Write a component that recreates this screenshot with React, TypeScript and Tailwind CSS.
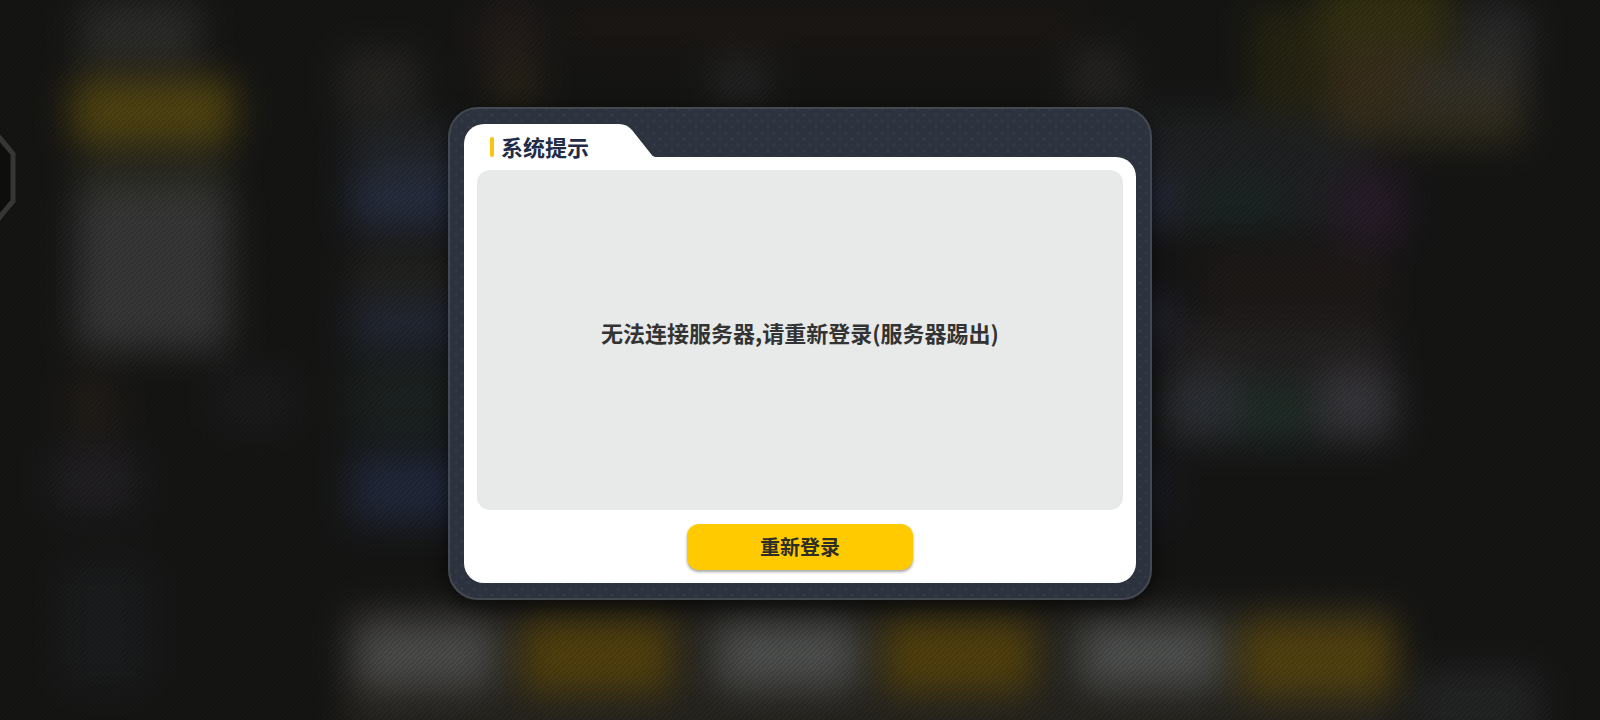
type Blob = {
  x: number;
  y: number;
  w: number;
  h: number;
  fill: string;
};

const BLOBS: Blob[] = [
  { x: 80, y: 0, w: 120, h: 66, fill: "#2c2c2a" },
  { x: 78, y: 150, w: 150, h: 40, fill: "#28281f" },
  { x: 72, y: 78, w: 162, h: 66, fill: "#524512" },
  { x: 76, y: 188, w: 154, h: 162, fill: "#383838" },
  { x: 68, y: 375, w: 50, h: 60, fill: "#231e18" },
  { x: 50, y: 445, w: 90, h: 70, fill: "#211f22" },
  { x: 60, y: 560, w: 90, h: 130, fill: "#1b1c1d" },
  { x: 215, y: 370, w: 80, h: 60, fill: "#1c1c1d" },
  { x: 340, y: 50, w: 80, h: 70, fill: "#262522" },
  { x: 480, y: 0, w: 60, h: 70, fill: "#241d1b" },
  { x: 490, y: 60, w: 50, h: 50, fill: "#292318" },
  { x: 560, y: 0, w: 520, h: 50, fill: "#1c1714" },
  { x: 710, y: 55, w: 60, h: 50, fill: "#232423" },
  { x: 1070, y: 45, w: 60, h: 70, fill: "#252422" },
  { x: 350, y: 125, w: 140, h: 45, fill: "#23262a" },
  { x: 350, y: 170, w: 140, h: 60, fill: "#272e3f" },
  { x: 350, y: 250, w: 140, h: 46, fill: "#232320" },
  { x: 350, y: 300, w: 140, h: 48, fill: "#242936" },
  { x: 350, y: 360, w: 140, h: 80, fill: "#1c2221" },
  { x: 350, y: 455, w: 145, h: 68, fill: "#22293c" },
  { x: 1120, y: 110, w: 250, h: 120, fill: "#1f2122" },
  { x: 1120, y: 170, w: 55, h: 60, fill: "#262a3b" },
  { x: 1120, y: 290, w: 55, h: 60, fill: "#222330" },
  { x: 1120, y: 460, w: 50, h: 60, fill: "#1d1f29" },
  { x: 1200, y: 185, w: 80, h: 40, fill: "#1b2725" },
  { x: 1335, y: 170, w: 70, h: 75, fill: "#281c2a" },
  { x: 1200, y: 250, w: 190, h: 60, fill: "#1f1a18" },
  { x: 1180, y: 320, w: 210, h: 50, fill: "#252121" },
  { x: 1165, y: 370, w: 75, h: 70, fill: "#2d3035" },
  { x: 1240, y: 375, w: 70, h: 70, fill: "#202c27" },
  { x: 1315, y: 370, w: 80, h: 70, fill: "#37363b" },
  { x: 1250, y: 5, w: 80, h: 110, fill: "#262412" },
  { x: 1320, y: -20, w: 130, h: 80, fill: "#343112" },
  { x: 1330, y: 40, w: 100, h: 95, fill: "#382e1b" },
  { x: 1460, y: 5, w: 70, h: 70, fill: "#2a2b2a" },
  { x: 1410, y: 60, w: 115, h: 60, fill: "#34312b" },
  { x: 1370, y: 105, w: 155, h: 38, fill: "#332e1d" },
  { x: 345, y: 606, w: 1050, h: 150, fill: "#26241f" },
  { x: 355, y: 622, w: 140, h: 66, fill: "#4e4e4d" },
  { x: 522, y: 620, w: 150, h: 72, fill: "#54420d" },
  { x: 716, y: 622, w: 142, h: 66, fill: "#505251" },
  { x: 884, y: 620, w: 150, h: 72, fill: "#54420d" },
  { x: 1080, y: 622, w: 142, h: 66, fill: "#505251" },
  { x: 1240, y: 620, w: 156, h: 76, fill: "#544310" },
  { x: 1410, y: 670, w: 130, h: 70, fill: "#242525" },
];

function Backdrop() {
  return (
    <svg
      className="absolute inset-0 h-full w-full"
      viewBox="0 0 1600 720"
      preserveAspectRatio="xMidYMid slice"
      aria-hidden="true"
    >
      <defs>
        <filter
          id="soft"
          filterUnits="userSpaceOnUse"
          x="-60"
          y="-60"
          width="1720"
          height="840"
          colorInterpolationFilters="sRGB"
        >
          <feGaussianBlur stdDeviation="18" />
        </filter>
        <pattern
          id="stripes"
          width="5"
          height="5"
          patternUnits="userSpaceOnUse"
        >
          <path
            d="M-1 1L1 -1M0 5L5 0M4 6L6 4"
            stroke="#000"
            strokeOpacity="0.14"
            strokeWidth="1.8"
          />
        </pattern>
      </defs>
      <g filter="url(#soft)">
        <rect x="-60" y="-60" width="1720" height="840" fill="#151514" />
        {BLOBS.map((b, i) => (
          <rect
            key={i}
            x={b.x}
            y={b.y}
            width={b.w}
            height={b.h}
            rx="12"
            fill={b.fill}
          />
        ))}
      </g>
      <rect width="1600" height="720" fill="url(#stripes)" />
      <path
        d="M-6 131L13 154V201L-6 224"
        fill="#0e0e0d"
        stroke="#363636"
        strokeWidth="5"
      />
    </svg>
  );
}

function DialogTab({ title }: { title: string }) {
  return (
    <div className="flex h-[33px]">
      <div className="flex w-[152px] items-center gap-[7px] rounded-tl-[20px] bg-white pt-3 pl-[26px]">
        <span className="h-5 w-1 shrink-0 rounded-full bg-[#fcc40c]" />
        <h1
          id="dialog-title"
          className="pb-0.5 text-[22px] leading-6 font-bold whitespace-nowrap text-[#222c48]"
        >
          {title}
        </h1>
      </div>
      <svg width="42" height="33" viewBox="0 0 42 33" aria-hidden="true">
        <path d="M0 0H3Q11 0 16 6L35 30Q37 33 39 33H0Z" fill="#fff" />
      </svg>
    </div>
  );
}

function Dialog({
  title,
  message,
  action,
}: {
  title: string;
  message: string;
  action: string;
}) {
  return (
    <div
      role="alertdialog"
      aria-labelledby="dialog-title"
      aria-describedby="dialog-message"
      className="relative w-full max-w-[704px] rounded-[30px] border-2 border-[#444951] bg-[#2d333e] bg-[radial-gradient(circle,#343b45_1px,transparent_2px),radial-gradient(circle,#343b45_1px,transparent_2px)] bg-size-[12px_12px] bg-position-[0_0,6px_6px] px-[14px] py-[15px] shadow-[0_6px_20px_rgba(0,0,0,0.6)]"
    >
      <DialogTab title={title} />
      <div className="flex flex-col items-center gap-[14px] rounded-[20px] rounded-tl-none bg-white p-[13px]">
        <div className="flex min-h-[340px] w-full items-center justify-center rounded-[13px] bg-[#e8eae9] px-6 pb-4">
          <p
            id="dialog-message"
            className="text-center text-[22px] leading-8 font-bold text-[#333]"
          >
            {message}
          </p>
        </div>
        <button
          type="button"
          className="h-[46px] w-[226px] cursor-pointer rounded-xl bg-[#ffcb00] text-[20px] leading-6 font-bold text-[#2d2e26] shadow-[0_2px_3px_rgba(0,0,0,0.35)]"
        >
          {action}
        </button>
      </div>
    </div>
  );
}

export default function App() {
  return (
    <main className="relative flex min-h-screen items-center justify-center overflow-hidden bg-[#151514] px-4 pb-[13px] font-['Noto_Sans_CJK_SC',sans-serif]">
      <Backdrop />
      <Dialog
        title="系统提示"
        message="无法连接服务器,请重新登录(服务器踢出)"
        action="重新登录"
      />
    </main>
  );
}
